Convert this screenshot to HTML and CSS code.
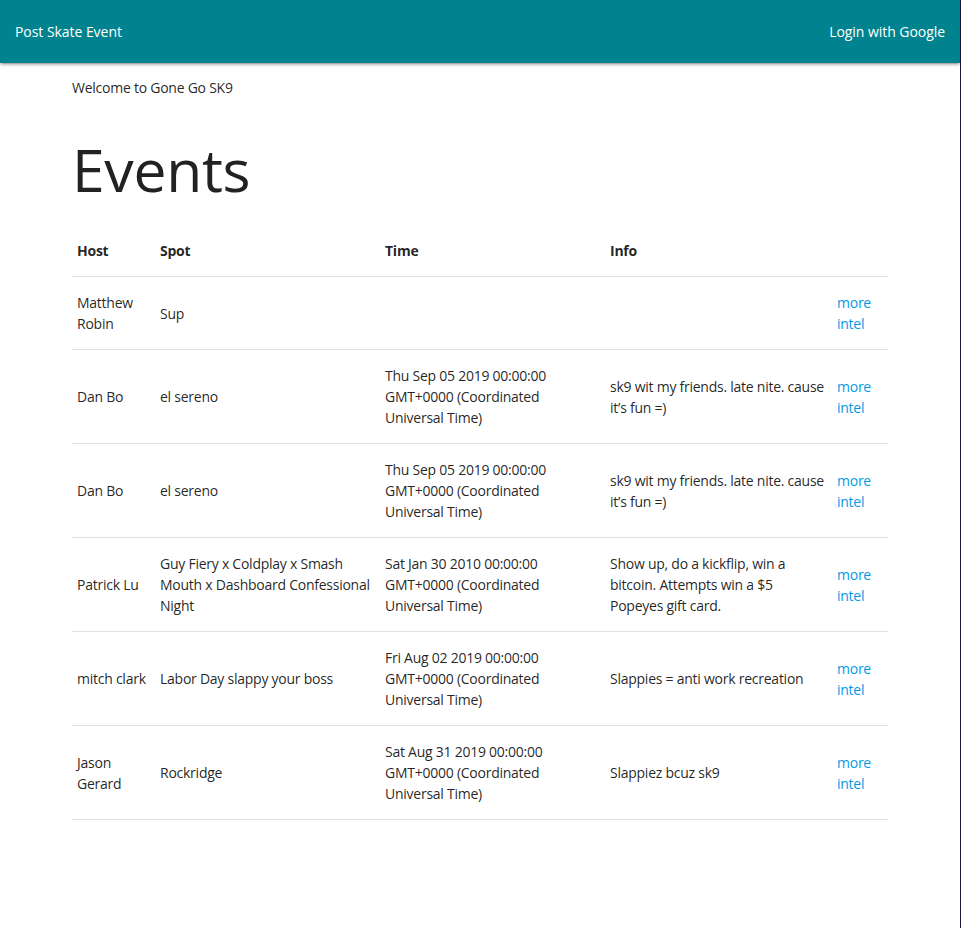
FILE: index.html
```html
<!DOCTYPE html>
<html lang="en">
<head>
<meta charset="utf-8">
<title>Gone Go SK9</title>
<link rel="stylesheet" href="styles.css">
</head>
<body>
<div class="page">
  <nav class="navbar">
    <a class="nav-link" href="#">Post Skate Event</a>
    <a class="nav-link" href="#">Login with Google</a>
  </nav>
  <main class="container">
    <p class="welcome">Welcome to Gone Go SK9</p>
    <h1 class="title">Events</h1>
    <table class="events">
      <colgroup>
        <col class="c-host"><col class="c-spot"><col class="c-time"><col class="c-info"><col class="c-link">
      </colgroup>
      <thead>
        <tr><th>Host</th><th>Spot</th><th>Time</th><th>Info</th><th></th></tr>
      </thead>
      <tbody>
        <tr><td>Matthew Robin</td><td>Sup</td><td></td><td></td><td><a href="#">more intel</a></td></tr>
        <tr><td>Dan Bo</td><td>el sereno</td><td>Thu Sep 05 2019 00:00:00 GMT+0000 (Coordinated Universal Time)</td><td>sk9 wit my friends. late nite. cause it’s fun =)</td><td><a href="#">more intel</a></td></tr>
        <tr><td>Dan Bo</td><td>el sereno</td><td>Thu Sep 05 2019 00:00:00 GMT+0000 (Coordinated Universal Time)</td><td>sk9 wit my friends. late nite. cause it’s fun =)</td><td><a href="#">more intel</a></td></tr>
        <tr><td>Patrick Lu</td><td>Guy Fiery x Coldplay x Smash Mouth x Dashboard Confessional Night</td><td>Sat Jan 30 2010 00:00:00 GMT+0000 (Coordinated Universal Time)</td><td>Show up, do a kickflip, win a bitcoin. Attempts win a $5 Popeyes gift card.</td><td><a href="#">more intel</a></td></tr>
        <tr><td>mitch clark</td><td>Labor Day slappy your boss</td><td>Fri Aug 02 2019 00:00:00 GMT+0000 (Coordinated Universal Time)</td><td>Slappies = anti work recreation</td><td><a href="#">more intel</a></td></tr>
        <tr><td>Jason Gerard</td><td>Rockridge</td><td>Sat Aug 31 2019 00:00:00 GMT+0000 (Coordinated Universal Time)</td><td>Slappiez bcuz sk9</td><td><a href="#">more intel</a></td></tr>
      </tbody>
    </table>
  </main>
</div>
</body>
</html>
```
FILE: styles.css
```css
html, body {
  margin: 0;
  padding: 0;
  background: #fff;
}
body {
  font-family: "Open Sans", "Noto Sans", sans-serif;
  font-size: 14px;
  line-height: 21px;
  letter-spacing: -0.25px;
  color: rgba(0, 0, 0, 0.87);
}
.page {
  width: 960px;
  min-height: 928px;
  border-right: 1px solid #1b1840;
}
.navbar {
  height: 63px;
  background: #00838f;
  display: flex;
  justify-content: space-between;
  align-items: center;
  padding: 0 15px;
  box-shadow: 0 2px 2px 0 rgba(0,0,0,.14), 0 3px 1px -2px rgba(0,0,0,.12), 0 1px 5px 0 rgba(0,0,0,.2);
}
.nav-link {
  color: #fff;
  text-decoration: none;
  font-size: 14px;
  letter-spacing: -0.05px;
}
.container {
  width: 816px;
  margin: 0 auto 0 72px;
}
.welcome {
  margin: 14px 0 0;
}
.title {
  font-size: 58.8px;
  line-height: 64.7px;
  font-weight: 400;
  letter-spacing: -0.3px;
  margin: 39px 0 23.5px;
  color: #222;
}
.events {
  width: 816px;
  border-collapse: collapse;
  table-layout: fixed;
}
.c-host { width: 83px; }
.c-spot { width: 225px; }
.c-time { width: 225px; }
.c-info { width: 227px; }
.c-link { width: 56px; }
.events th, .events td {
  padding: 15px 5px;
  text-align: left;
  vertical-align: middle;
}
.events th {
  font-weight: 700;
}
.events tr {
  border-bottom: 1px solid rgba(0, 0, 0, 0.12);
}
.events a {
  color: #039be5;
  text-decoration: none;
}
```
